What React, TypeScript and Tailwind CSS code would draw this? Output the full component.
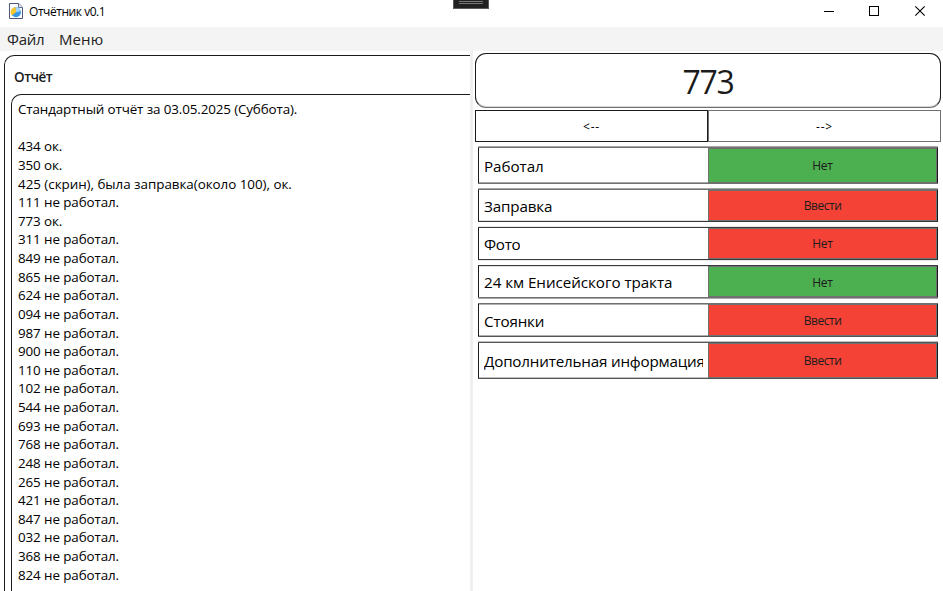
import React from "react";

const report = [
  "434 ок.", "350 ок.", "425 (скрин), была заправка(около 100), ок.", "111 не работал.", "773 ок.",
  "311 не работал.", "849 не работал.", "865 не работал.", "624 не работал.", "094 не работал.",
  "987 не работал.", "900 не работал.", "110 не работал.", "102 не работал.", "544 не работал.",
  "693 не работал.", "768 не работал.", "248 не работал.", "265 не работал.", "421 не работал.",
  "847 не работал.", "032 не работал.", "368 не работал.", "824 не работал.",
];

const GREEN = "bg-[#4caf50]";
const RED = "bg-[#f44336]";

type Row = {
  label: string;
  action: string;
  color: string;
  top: string[];
  bottom: string[];
  body: string;
  cell: string;
  button: string;
};

const rows: Row[] = [
  { label: "Работал", action: "Нет", color: GREEN, top: ["bg-[#a8a8a8]", "bg-[#707070]"], bottom: ["bg-[#707070]"], body: "h-[35px]", cell: "border-b border-b-[#a8a8a8] pt-px tracking-[-0.05px]", button: "tracking-[-0.25px]" },
  { label: "Заправка", action: "Ввести", color: RED, top: ["bg-[#a8a8a8]", "bg-[#707070]"], bottom: ["bg-[#383838]"], body: "h-[31px]", cell: "border-b border-b-[#e0e0e0] pt-px tracking-[-0.15px]", button: "tracking-[-0.45px]" },
  { label: "Фото", action: "Нет", color: RED, top: ["bg-[#e8e8e8]", "bg-[#3a3a3a]"], bottom: ["bg-[#3a3a3a]", "bg-[#e8e8e8]"], body: "h-[31px]", cell: "tracking-[-0.3px]", button: "tracking-[-0.25px]" },
  { label: "24 км Енисейского тракта", action: "Нет", color: GREEN, top: ["bg-[#3a3a3a]"], bottom: ["bg-[#707070]", "bg-[#a8a8a8]"], body: "h-[31px]", cell: "border-t border-t-[#e0e0e0] tracking-[-0.05px]", button: "pt-[2px] tracking-[-0.25px]" },
  { label: "Стоянки", action: "Ввести", color: RED, top: ["bg-[#707070]"], bottom: ["bg-[#555555]"], body: "h-[32px]", cell: "border-y border-y-[#b0b0b0] pt-px tracking-[-0.15px]", button: "pt-[2px] tracking-[-0.45px]" },
  { label: "Дополнительная информация", action: "Ввести", color: RED, top: ["bg-[#c0c0c0]", "bg-[#555555]"], bottom: ["bg-[#555555]"], body: "h-[35px]", cell: "border-b border-b-[#c0c0c0] pt-px tracking-[-0.19px]", button: "tracking-[-0.45px]" },
];

function AppIcon() {
  return (
    <svg width="14" height="17" viewBox="0 0 14 17" className="block">
      <path d="M.5.5h9.3l3.7 3.7v11.3H.5z" fill="#fff" stroke="#4d5878" />
      <path d="M9.5.5v4h4" fill="#e8edf5" stroke="#65708c" />
      <circle cx="7" cy="9.2" r="5" fill="#3998e8" />
      <path d="M7 9.2 2.9 12.5A5 5 0 0 1 6.8 4.2z" fill="#f6c72e" />
      <path d="M7 9.2V4.2a5 5 0 0 1 4.9 4z" fill="#9ed5fa" />
    </svg>
  );
}

function WindowControls() {
  return (
    <svg width="119" height="27" viewBox="0 0 119 27" className="block" fill="none" stroke="#000" shapeRendering="crispEdges">
      <path d="M0 11.5h10" />
      <path d="M45.5 6.5h9v9h-9z" />
      <path d="M91.3 6.3l9.4 9.4M100.7 6.3l-9.4 9.4" shapeRendering="auto" strokeWidth="1.1" />
    </svg>
  );
}

export default function App() {
  return (
    <div className="relative flex h-[591px] w-[943px] flex-col overflow-hidden bg-white font-['Open_Sans','Noto_Sans',sans-serif] text-[#1b1b1b]">
      <div className="absolute left-[453px] top-0 flex h-[9px] w-9 flex-col items-center gap-px border border-t-0 border-[#5c5c5c] bg-[#222] pt-px">
        <div className="h-px w-6 bg-[#777]" />
        <div className="h-px w-6 bg-[#777]" />
      </div>

      <header className="flex h-[27px] shrink-0 justify-between pl-[9px]">
        <div className="flex gap-[6px] pt-[3px]">
          <AppIcon />
          <span className="text-[12px] leading-[17px] tracking-[-0.45px] text-black">Отчётник v0.1</span>
        </div>
        <WindowControls />
      </header>

      <nav className="flex h-6 shrink-0 gap-[14px] bg-[#f4f4f4] pl-[7px] text-[15px] leading-[25px] text-[#222]">
        <span className="w-[38px] whitespace-nowrap tracking-[-0.3px]">Файл</span>
        <span className="whitespace-nowrap tracking-[0.1px]">Меню</span>
      </nav>

      <main className="flex min-h-0 flex-1">
        <section className="flex w-[470px] shrink-0 overflow-hidden pl-1 pt-1">
          <div className="flex flex-1 flex-col rounded-tl-[10px] border-l border-t border-[#1b1b1b] pl-[6px]">
            <h1 className="h-[38px] pl-[3px] text-[13.5px] font-semibold leading-[42px] tracking-[-0.5px]">Отчёт</h1>
            <div className="flex-1 whitespace-nowrap rounded-tl-[10px] border-l border-t border-[#1b1b1b] pl-[6px] pt-[5px] text-[13.4px] leading-[18.63px] tracking-[-0.1px] text-black">
              <p className="tracking-[-0.12px]">Стандартный отчёт за 03.05.2025 (Суббота).</p>
              <p>&nbsp;</p>
              {report.map((line) => <p key={line} className={line.length > 20 ? "tracking-[-0.03px]" : ""}>{line}</p>)}
            </div>
          </div>
        </section>
        <div className="w-[3px] shrink-0 bg-[#f0f0f0]" />

        <section className="flex w-[470px] shrink-0 flex-col pl-[2px] pr-[2px] pt-[2px]">
          <div className="flex h-[55px] items-center justify-center rounded-[11px] border border-[#1b1b1b] border-b-[#707070] pt-[3px] text-[32px] leading-10 tracking-[-1.3px] shadow-[inset_0_-1px_0_#d8d8d8]">
            773
          </div>
          <div className="mt-[2px] flex h-8 text-[12px] tracking-[0.8px] text-black">
            <button className="flex-1 border border-[#1b1b1b] pt-[2px]">&lt;--</button>
            <button className="flex-1 border border-[#707070] pt-[2px]">--&gt;</button>
          </div>
          <div className="pl-[3px] pr-[3px]">
            {rows.map((row) => (
              <div key={row.label} className="mt-1">
                {row.top.map((c, i) => <div key={i} className={`h-px ${c}`} />)}
                <div className={`flex border-x border-[#1b1b1b] ${row.body}`}>
                  <div className={`flex w-[229px] items-center pl-[5px] pr-[5px] ${row.cell}`}>
                    <span className="overflow-hidden whitespace-nowrap text-[15.2px] leading-5 text-black">{row.label}</span>
                  </div>
                  <button className={`flex-1 border border-[#707070] text-[12px] leading-4 ${row.button} ${row.color}`}>{row.action}</button>
                </div>
                {row.bottom.map((c, i) => <div key={i} className={`h-px ${c}`} />)}
              </div>
            ))}
          </div>
        </section>
      </main>
    </div>
  );
}
